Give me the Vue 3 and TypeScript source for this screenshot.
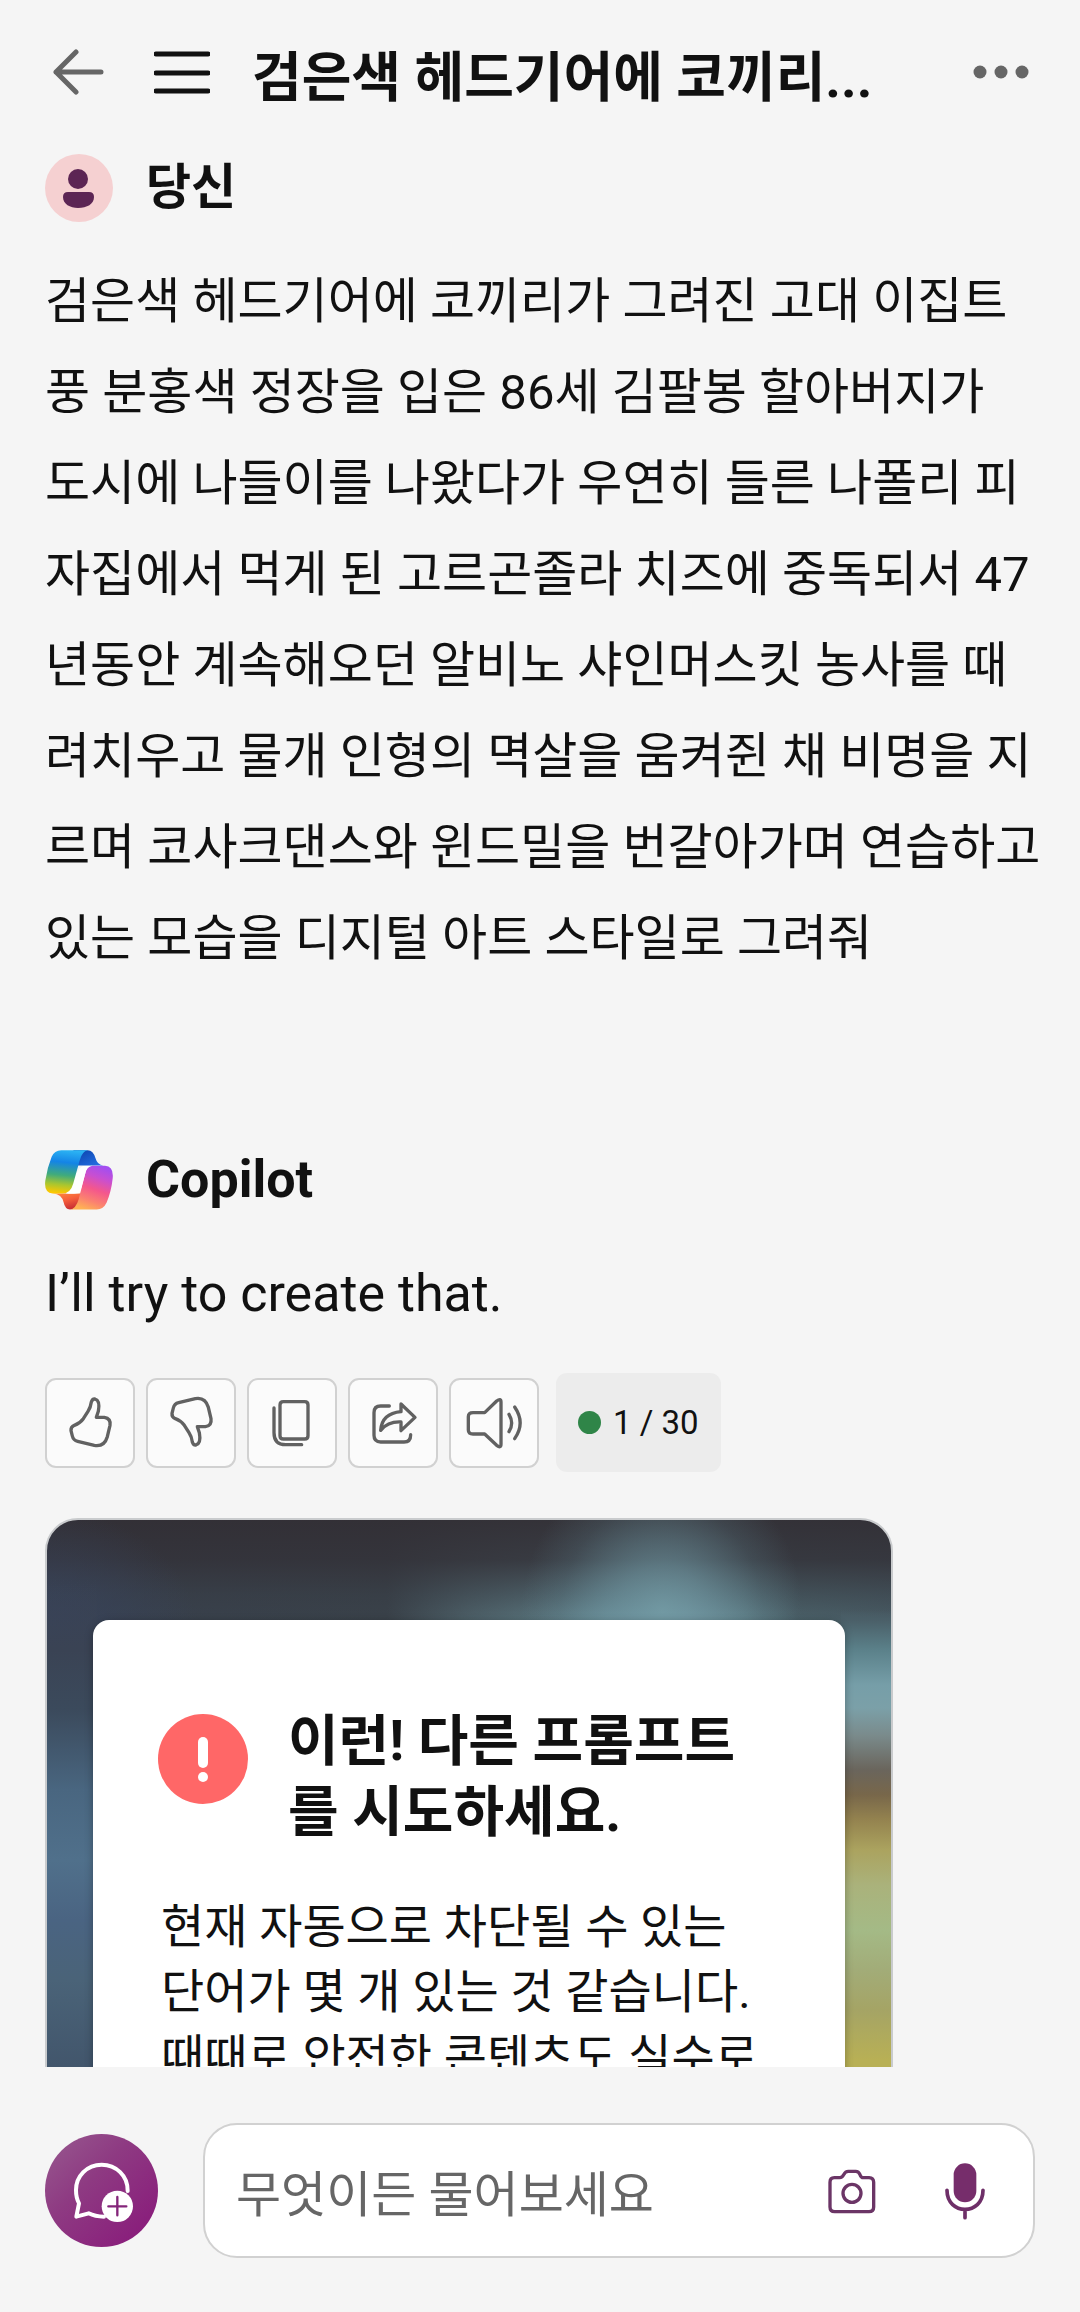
<script setup lang="ts">
import { ref } from 'vue'

const title = '검은색 헤드기어에 코끼리...'
const promptLines: string[] = [
  '검은색 헤드기어에 코끼리가 그려진 고대 이집트',
  '풍 분홍색 정장을 입은 86세 김팔봉 할아버지가',
  '도시에 나들이를 나왔다가 우연히 들른 나폴리 피',
  '자집에서 먹게 된 고르곤졸라 치즈에 중독되서 47',
  '년동안 계속해오던 알비노 샤인머스킷 농사를 때',
  '려치우고 물개 인형의 멱살을 움켜쥔 채 비명을 지',
  '르며 코사크댄스와 윈드밀을 번갈아가며 연습하고',
  '있는 모습을 디지털 아트 스타일로 그려줘',
]

interface Action {
  label: string
  paths: string[]
}

const thumb =
  'M154 118 H178 Q198 121 195 142 L187 176 Q178 207 148 202 L98 190 Q85 187 82 174 L78 158 Q77 147 88 142 Q105 136 115 122 L129 100 Q137 88 139 72 Q142 62 150 63 Q166 67 160 100 Z'
const thumbDown =
  'M154 146 H178 Q198 143 195 122 L187 88 Q178 57 148 62 L98 74 Q85 77 82 90 L78 106 Q77 117 88 122 Q105 128 115 142 L129 164 Q137 176 139 192 Q142 202 150 201 Q166 197 160 164 Z'

const actions: Action[] = [
  { label: '좋아요', paths: [thumb] },
  { label: '싫어요', paths: [thumbDown] },
  {
    label: '복사',
    paths: [
      'M109 71 H173 Q183 71 183 81 V173 Q183 183 173 183 H109 Q99 183 99 173 V81 Q99 71 109 71 Z',
      'M81 90 V164 Q81 200 116 200 H164',
    ],
  },
  {
    label: '공유',
    paths: [
      'M124 84 H98 Q78 84 78 104 V172 Q78 192 98 192 H168 Q188 192 188 170',
      'M159 78 L201 118 L159 158 V132 Q120 130 98 157 Q102 106 159 101 Z',
    ],
  },
  {
    label: '소리내어 읽기',
    paths: [
      'M72 104 H107 L143 69 Q156 59 156 72 V199 Q156 212 143 202 L107 168 H72 Q58 168 58 156 V116 Q58 104 72 104 Z',
      'M180 109 Q196 135 180 161',
      'M197 87 Q230 135 197 182',
    ],
  },
]

const message = ref('')
</script>

<template>
  <div class="app">
    <header class="topbar">
      <button class="icon-btn" aria-label="뒤로">
        <svg width="52" height="46" viewBox="0 0 52 46" fill="none" stroke="#666" stroke-width="5" stroke-linecap="round" stroke-linejoin="round">
          <path d="M48 23 H3 M23 3 L3 23 L23 43" />
        </svg>
      </button>
      <button class="icon-btn menu" aria-label="메뉴">
        <svg width="56" height="44" viewBox="0 0 56 44" stroke="#111" stroke-width="5" stroke-linecap="round">
          <path d="M2 4 H54 M2 23 H54 M2 41 H54" />
        </svg>
      </button>
      <h1 class="title">{{ title }}</h1>
      <button class="icon-btn" aria-label="더 보기">
        <svg width="56" height="14" viewBox="0 0 56 14" fill="#666">
          <circle cx="7" cy="7" r="6.5" />
          <circle cx="28" cy="7" r="6.5" />
          <circle cx="49" cy="7" r="6.5" />
        </svg>
      </button>
    </header>

    <main class="chat">
      <section class="turn user">
        <div class="author">
          <svg width="68" height="68" viewBox="0 0 68 68">
            <circle cx="34" cy="34" r="34" fill="#f5d0d1" />
            <circle cx="33" cy="25" r="10" fill="#5c2554" />
            <path d="M23 38 H44 Q49 38 49 43 C49 50 42 54 33 54 C25 54 18 50 18 43 Q18 38 23 38 Z" fill="#5c2554" />
          </svg>
          <h2>당신</h2>
        </div>
        <p class="prompt">
          <span v-for="line in promptLines" :key="line">{{ line }}</span>
        </p>
      </section>

      <section class="turn">
        <div class="author">
          <svg width="68" height="60" viewBox="75 93 204 179">
            <defs>
              <linearGradient id="cool" x1="0.5" y1="0" x2="0.4" y2="1">
                <stop offset="0" stop-color="#2bb3f3" />
                <stop offset="0.28" stop-color="#1484e6" />
                <stop offset="0.58" stop-color="#40ab7c" />
                <stop offset="0.8" stop-color="#a9c62f" />
                <stop offset="1" stop-color="#ffc800" />
              </linearGradient>
              <linearGradient id="deep" x1="0" y1="0" x2="1" y2="1">
                <stop offset="0" stop-color="#0a3fa8" />
                <stop offset="1" stop-color="#2673e8" />
              </linearGradient>
              <linearGradient id="warm" x1="0.7" y1="0" x2="0.35" y2="1">
                <stop offset="0" stop-color="#a34ef0" />
                <stop offset="0.25" stop-color="#c94fd0" />
                <stop offset="0.52" stop-color="#f4578c" />
                <stop offset="0.78" stop-color="#fb8170" />
                <stop offset="1" stop-color="#ffb254" />
              </linearGradient>
              <linearGradient id="ember" x1="0" y1="0" x2="0.5" y2="1">
                <stop offset="0" stop-color="#ff8a3c" />
                <stop offset="0.5" stop-color="#f65f3c" />
                <stop offset="1" stop-color="#c92f34" />
              </linearGradient>
            </defs>
            <path d="M160 93 H203 Q220 94 226 116 Q232 138 250 139 H165 Z" fill="url(#deep)" />
            <path d="M98 223 H190 L178 250 Q172 271 150 271 Q135 270 131 250 Q126 225 98 223 Z" fill="url(#ember)" />
            <path d="M188 141 H216 L190 205 Q185 223 168 223 H138 L160 170 Z" fill="#fff" />
            <path d="M124 93 H203 Q186 96 179 124 L160 192 Q152 223 126 223 H98 Q71 221 76 184 Q82 145 95 113 Q103 93 124 93 Z" fill="url(#cool)" />
            <path d="M218 140 H255 Q282 142 278 178 Q274 216 260 250 Q250 271 230 271 H150 Q168 268 176 240 L195 166 Q200 141 218 140 Z" fill="url(#warm)" />
            <path d="M203 141 H190 Q178 143 172 162 L159 206 Q154 223 140 223 H162 Q180 222 184 206 L196 162 Q200 141 218 140 Z" fill="#fff" />
          </svg>
          <h2 class="latin">Copilot</h2>
        </div>
        <p class="reply">I’ll try to create that.</p>

        <div class="actions">
          <button v-for="action in actions" :key="action.label" class="action" :aria-label="action.label">
            <svg width="90" height="90" viewBox="0 0 270 270">
              <path v-for="d in action.paths" :key="d" :d="d" />
            </svg>
          </button>
          <span class="counter"><i class="dot"></i>1 / 30</span>
        </div>

        <div class="card">
          <div class="dialog">
            <div class="dialog-head">
              <svg width="90" height="90" viewBox="0 0 90 90">
                <circle cx="45" cy="45" r="45" fill="#ff6767" />
                <rect x="40" y="23" width="10" height="31" rx="5" fill="#fff" />
                <circle cx="45" cy="63" r="5" fill="#fff" />
              </svg>
              <h3>이런! 다른 프롬프트를 시도하세요.</h3>
            </div>
            <p class="dialog-text">현재 자동으로 차단될 수 있는 단어가 몇 개 있는 것 같습니다. 때때로 안전한 콘텐츠도 실수로</p>
          </div>
        </div>
      </section>
    </main>

    <footer class="composer">
      <button class="new-chat" aria-label="새 대화">
        <svg width="113" height="113" viewBox="75 162 339 339" fill="none" stroke-linecap="round" stroke-linejoin="round">
          <path d="M323 333 C324 287 288 254 245 254 C201 254 168 288 168 330 C168 350 171 359 177 370 L169 410 L206 400 Q225 410 252 410" stroke="#fff" stroke-width="12" />
          <circle cx="292" cy="379" r="47" fill="#fff" />
          <path d="M265 379 H319 M292 351 V406" stroke="#84257a" stroke-width="7" />
        </svg>
      </button>
      <div class="field">
        <input v-model="message" type="text" placeholder="무엇이든 물어보세요" aria-label="무엇이든 물어보세요" />
        <button class="icon-btn" aria-label="카메라">
          <svg width="48" height="56" viewBox="805 252 144 168" fill="none" stroke="#6b3566" stroke-width="10">
            <path d="M824 296 H840 Q848 296 852 287 Q857 277 866 277 H888 Q897 277 901 287 Q904 296 911 296 H928 Q942 297 942 310 V384 Q942 398 928 398 H825 Q811 398 811 384 V310 Q811 296 824 296 Z" />
            <circle cx="877" cy="343" r="27" />
          </svg>
        </button>
        <button class="icon-btn" aria-label="음성 입력">
          <svg width="40" height="58" viewBox="1154 250 120 174" fill="none" stroke="#6e2f68" stroke-width="11" stroke-linecap="round">
            <rect x="1180" y="254" width="68" height="117" rx="34" fill="#762d6b" stroke="none" />
            <path d="M1160 335 C1160 411 1268 411 1268 335 M1214 393 V417" />
          </svg>
        </button>
      </div>
    </footer>
  </div>
</template>

<style>
body {
  background: #f5f5f5;
}
</style>

<style scoped>
.app {
  display: flex;
  flex-direction: column;
  height: 100vh;
  overflow: hidden;
  color: #111;
  background: #f5f5f5;
  font-family: Roboto, 'Noto Sans CJK KR', sans-serif;
}

h1,
h2,
h3,
p {
  margin: 0;
}

svg {
  display: block;
  flex: none;
}

button {
  flex: none;
  padding: 0;
  border: 0;
  background: none;
  cursor: pointer;
}

.topbar {
  display: flex;
  flex: none;
  align-items: center;
  height: 144px;
  padding: 0 51px 0 53px;
  box-sizing: border-box;
}

.menu {
  margin: 0 42px 0 49px;
}

.title {
  flex: 1;
  overflow: hidden;
  padding-top: 14px;
  white-space: nowrap;
  font-size: 54px;
  line-height: 80px;
  font-weight: 700;
}

.chat {
  flex: 1;
  min-height: 0;
  overflow: hidden;
  padding: 10px 45px 0;
}

.author {
  display: flex;
  align-items: center;
  gap: 33px;
  height: 68px;
}

.author h2 {
  font-size: 49px;
  line-height: 68px;
  font-weight: 700;
}

.author .latin {
  font-size: 52px;
}

.user {
  margin-bottom: 162px;
}

.prompt {
  margin-top: 34px;
  font-size: 49px;
  line-height: 91px;
}

.prompt span {
  display: block;
  white-space: nowrap;
}

.reply {
  margin-top: 34px;
  font-size: 52px;
  line-height: 91px;
}

.actions {
  display: flex;
  align-items: center;
  gap: 11px;
  margin-top: 34px;
}

.action {
  width: 90px;
  height: 90px;
  border: 2px solid #d1d1d1;
  border-radius: 11px;
  background: #fbfbfb;
}

.action svg {
  margin: -2px;
  fill: none;
  stroke: #616161;
  stroke-width: 10px;
  stroke-linecap: round;
  stroke-linejoin: round;
}

.counter {
  display: flex;
  align-items: center;
  gap: 12px;
  height: 99px;
  margin-left: 6px;
  padding: 0 22px;
  border-radius: 11px;
  background: #ececec;
  font-size: 33px;
}

.dot {
  width: 23px;
  height: 23px;
  border-radius: 50%;
  background: #2f8548;
}

.card {
  max-width: 848px;
  margin-top: 46px;
  padding: 100px 46px 80px;
  box-sizing: border-box;
  border: 2px solid #c9cbcd;
  border-radius: 33px;
  background:
    linear-gradient(transparent 90px, #4a5f68 100px, #5b818a 130px, #769ea8 165px, #7ba0a8 188px, #7a8b8c 215px, #6a655c 250px, #78674a 275px, #94834f 300px, #aba35f 330px, #aab27b 365px, #a4ba86 410px, #a2ac78 450px, #a5a465 490px, #b8b055 540px) right top / 50px 100% no-repeat,
    linear-gradient(transparent 60px, #3a4354 130px, #3b4a5c 190px, #496680 270px, #50708b 340px, #4a6482 400px, #4a6378 460px, #42566c 545px) left top / 50px 100% no-repeat,
    radial-gradient(ellipse 140px 150px at 615px 90px, rgba(118, 160, 170, 0.75) 0%, rgba(112, 152, 163, 0.6) 30%, rgba(100, 138, 150, 0.2) 72%, transparent 100%),
    radial-gradient(ellipse 150px 120px at 0 110px, #38435a 0%, transparent 100%),
    linear-gradient(rgba(50, 47, 53, 0.96) 0, rgba(51, 50, 57, 0.88) 40px, rgba(54, 58, 66, 0.5) 75px, transparent 110px),
    linear-gradient(90deg, #38414f 0, #3a434b 340px, #50656d 420px, #5d7b83 490px, #6f98a2 560px, #769ea9 640px, #648890 695px, #4e676f 750px, #4a5f68 846px);
}

.dialog {
  padding: 86px 65px 60px;
  border-radius: 16px;
  background: #fff;
  box-shadow: 0 2px 8px rgba(0, 0, 0, 0.3);
}

.dialog-head {
  display: flex;
  align-items: flex-start;
  gap: 40px;
}

.dialog-head svg {
  margin-top: 8px;
}

.dialog h3 {
  padding-right: 12px;
  font-size: 55px;
  line-height: 71px;
  font-weight: 700;
  word-break: break-all;
}

.dialog-text {
  margin-top: 46px;
  padding-left: 3px;
  font-size: 47px;
  line-height: 65px;
  word-break: keep-all;
}

.composer {
  display: flex;
  flex: none;
  align-items: center;
  gap: 45px;
  padding: 56px 45px 54px;
}

.new-chat {
  border-radius: 50%;
  background: linear-gradient(135deg, #95528c 10%, #8e3a82 40%, #891c7b 90%);
}

.field {
  display: flex;
  flex: 1;
  align-items: center;
  gap: 69px;
  height: 135px;
  min-width: 0;
  padding: 0 48px 0 31px;
  box-sizing: border-box;
  border: 2px solid #d1d1d1;
  border-radius: 34px;
  background: #fff;
}

.field input {
  flex: 1;
  min-width: 0;
  padding: 10px 0 0;
  border: 0;
  outline: 0;
  background: none;
  color: #111;
  font-family: inherit;
  font-size: 49px;
  line-height: 72px;
}

.field input::placeholder {
  color: #666;
  opacity: 1;
}
</style>
